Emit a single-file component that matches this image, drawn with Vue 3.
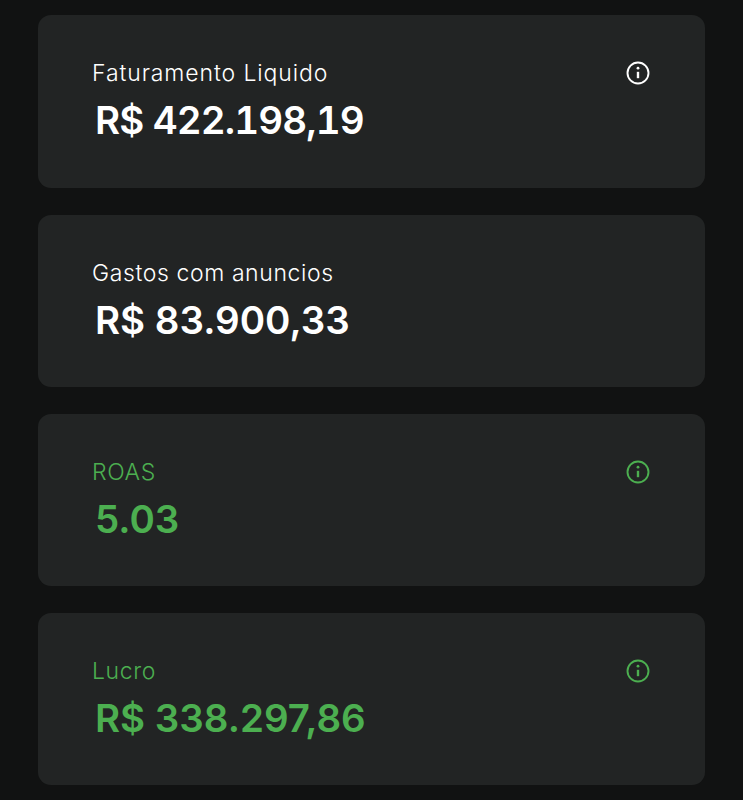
<template>
  <main class="page">
    <section
      v-for="card in cards"
      :key="card.label"
      :class="['card', { green: card.green, wide: card.wide }]"
    >
      <div class="card-head">
        <span class="label">{{ card.label }}</span>
        <svg v-if="card.info" class="info" viewBox="0 0 24 24" fill="none" stroke="currentColor">
          <circle cx="12" cy="12" r="10.5" stroke-width="1.9" />
          <path d="M12 10.8v6.4" stroke-width="2.4" />
          <circle cx="12" cy="7.2" r="1.4" fill="currentColor" stroke="none" />
        </svg>
      </div>
      <div class="value">{{ card.value }}</div>
    </section>
  </main>
</template>

<script setup>
const cards = [
  { label: 'Faturamento Liquido', value: 'R$ 422.198,19', info: true, green: false, wide: true },
  { label: 'Gastos com anuncios', value: 'R$ 83.900,33', info: false, green: false },
  { label: 'ROAS', value: '5.03', info: true, green: true },
  { label: 'Lucro', value: 'R$ 338.297,86', info: true, green: true },
]
</script>

<style>
html,
body {
  background: #111212;
}
</style>

<style scoped>
.page {
  box-sizing: border-box;
  height: 800px;
  padding: 15.4px 38px 0 37.5px;
  display: flex;
  flex-direction: column;
  gap: 26.7px;
  overflow: hidden;
  background: #111212;
  font-family: Inter, "Liberation Sans", sans-serif;
}

.card {
  box-sizing: border-box;
  flex: none;
  height: 172.5px;
  padding: 45px 55px 0 54.5px;
  border-radius: 13px;
  background: #222424;
  color: #fff;
}

.card.green {
  color: #4caf50;
}

.card-head {
  display: flex;
  justify-content: space-between;
  align-items: center;
  height: 27px;
}

.label {
  font-size: 23px;
  font-weight: 300;
  letter-spacing: 0.6px;
  line-height: 27px;
}

.info {
  width: 24px;
  height: 24px;
  flex: none;
  margin-top: -1px;
}

.value {
  margin: 9px 0 0 3px;
  font-size: 38.5px;
  font-weight: 600;
  line-height: 48px;
}

/* the 1s in the first card are set wider than the rest */
.wide .label {
  letter-spacing: 0.9px;
}

.wide .value {
  font-variant-numeric: tabular-nums;
  letter-spacing: -0.9px;
}
</style>
